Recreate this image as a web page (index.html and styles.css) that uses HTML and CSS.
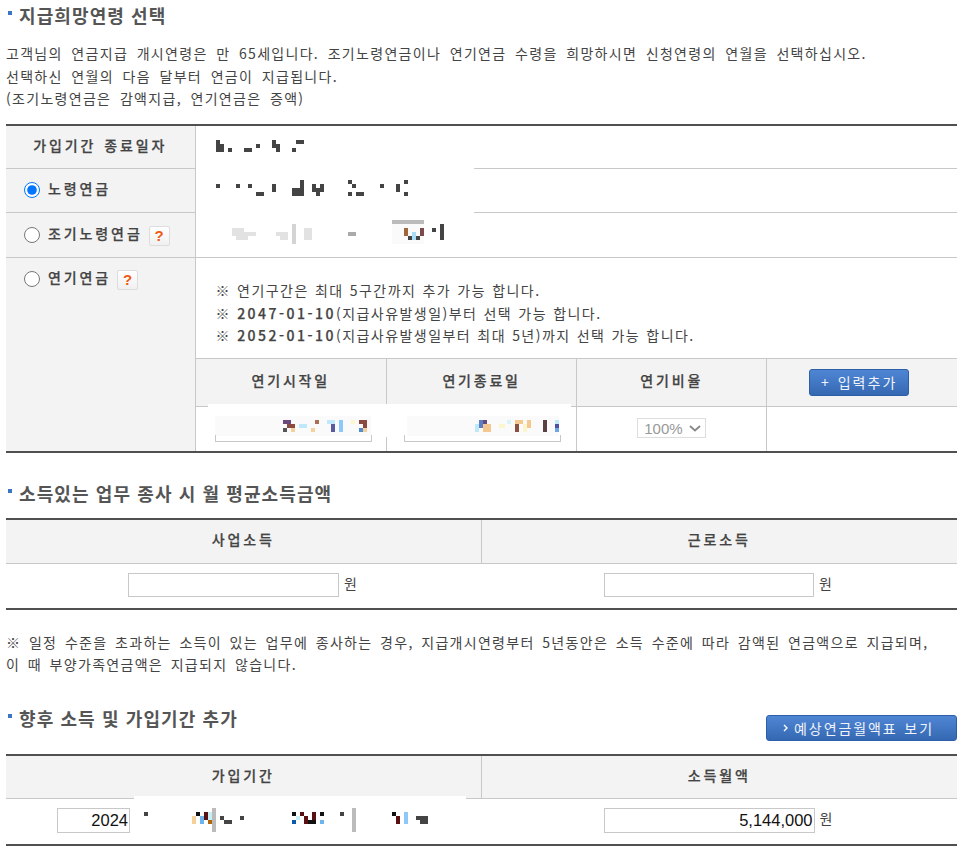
FILE: index.html
```html
<!DOCTYPE html>
<html lang="ko">
<head>
<meta charset="utf-8">
<title>지급희망연령 선택</title>
<link rel="stylesheet" href="styles.css">
</head>
<body>
<main class="page">
  <h2 class="title first">지급희망연령 선택</h2>
  <p class="desc">고객님의 연금지급 개시연령은 만 65세입니다. 조기노령연금이나 연기연금 수령을 희망하시면 신청연령의 연월을 선택하십시오.<br>선택하신 연월의 다음 달부터 연금이 지급됩니다.<br>(조기노령연금은 감액지급, 연기연금은 증액)</p>

  <table class="grid age">
    <colgroup><col class="c-left"><col></colgroup>
    <tr class="r1">
      <th class="center up">가입기간 종료일자</th>
      <td class="cell-mask">
        <svg class="px m1" width="92" height="12" viewBox="216 140 92 12"><path fill="#444" d="M216 140h4v4h4v4h-4v4h-4zM220 148h4v4h-4zM228 148h4v4h-4zM244 148h8v4h-8zM256 144h4v4h-4zM272 140h4v4h4v8h-4v-4h-4zM292 148h4v4h-4zM296 140h8v4h-8zM292 144h4v0h-4z"/></svg>
      </td>
    </tr>
    <tr class="r2">
      <th class="opt p10"><label class="radio"><input type="radio" name="p" checked>노령연금</label></th>
      <td class="cell-mask">
        <div class="wipe w2"></div>
        <svg class="px m2" width="192" height="16" viewBox="216 180 192 16"><path fill="#444" d="M216 184h4v4h-4zM236 184h4v4h-4zM248 184h4v4h-4zM256 192h8v4h-8zM272 184h4v8h-4zM292 188h4v-0h4v-8h4v16h-12zM312 184h4v4h4v-4h4v8h-4v4h-4v-4h-4zM348 180h4v4h4v4h-4v-4h-4zM348 192h4v4h-4zM356 192h8v4h-8zM380 184h4v4h-4zM396 184h4v8h-4zM404 180h4v4h-4zM404 192h4v4h-4z"/></svg>
      </td>
    </tr>
    <tr class="r3">
      <th class="opt p11"><label class="radio"><input type="radio" name="p">조기노령연금</label><span class="help">?</span></th>
      <td class="cell-mask">
        <div class="wipe w3"></div>
        <svg class="px m3" width="212" height="24" viewBox="232 220 212 24"><path fill="#e2e2e2" d="M232 228h12v4h12v4h-8v4h-12v-4h-4zM276 232h12v8h-8v-4h-4zM304 228h8v12h-8z"/><rect fill="#d4d4d4" x="292" y="224" width="4" height="20"/><rect fill="#aaa" x="348" y="232" width="8" height="4"/><rect fill="#bbb" x="392" y="220" width="32" height="4"/><rect fill="#fafafa" x="392" y="224" width="32" height="20"/><path fill="#a0663c" d="M404 228h4v8h-4z"/><path fill="#7c4a4a" d="M420 228h4v8h-4z"/><path fill="#444" d="M408 236h4v4h-4zM416 236h4v4h-4zM432 228h4v4h-4zM440 224h4v16h-4z"/><path fill="#a9dcf5" d="M412 232h4v8h-4z"/></svg>
      </td>
    </tr>
    <tr class="r4">
      <th class="opt p10"><label class="radio"><input type="radio" name="p">연기연금</label><span class="help">?</span></th>
      <td class="inner">
        <ul class="notes">
          <li>※ 연기구간은 최대 5구간까지 추가 가능 합니다.</li>
          <li>※ <b>2047-01-10</b>(지급사유발생일)부터 선택 가능 합니다.</li>
          <li>※ <b>2052-01-10</b>(지급사유발생일부터 최대 5년)까지 선택 가능 합니다.</li>
        </ul>
        <table class="defer">
          <colgroup><col class="dc1"><col><col><col></colgroup>
          <tr class="dh">
            <th class="lift">연기시작일</th>
            <th class="lift">연기종료일</th>
            <th class="lift">연기비율</th>
            <th><button class="btn add" type="button">+ 입력추가</button></th>
          </tr>
          <tr class="dr">
            <td colspan="2" class="date-cell">
              <div class="wipe w4"></div>
              <div class="date d1"><svg class="px" width="156" height="20" viewBox="216 416 156 20"><rect x="216" y="416" width="156" height="20" fill="#fafafa"/><path fill="#6a4a7a" d="M284 420h8v4h-8z"/><path fill="#8a4a40" d="M288 424h8v4h-8zM360 420h8v4h-8zM364 424h4v4h-4z"/><path fill="#555" d="M284 428h4v4h-4z"/><path fill="#f5d0a0" d="M292 428h4v4h-4zM312 428h4v4h-4zM364 428h4v4h-4z"/><path fill="#bfe8fa" d="M300 424h8v4h-8zM328 420h8v4h-8z"/><path fill="#a87050" d="M316 420h4v4h-4z"/><path fill="#5a5aa0" d="M332 424h4v8h-4z"/><path fill="#8cc8fa" d="M340 420h4v12h-4z"/><path fill="#fbf6cc" d="M352 420h4v4h-4z"/><path fill="#4f8fd0" d="M360 428h4v4h-4z"/></svg></div>
              <div class="date d2"><svg class="px" width="155" height="20" viewBox="405 416 155 20"><rect x="408" y="416" width="152" height="20" fill="#fafafa"/><path fill="#bfe8fa" d="M476 424h4v8h-4z"/><path fill="#5b80c8" d="M480 420h4v8h-4z"/><path fill="#6a4a7a" d="M484 420h4v4h-4z"/><path fill="#f5c890" d="M484 424h8v8h-8zM516 420h8v4h-8zM528 420h4v8h-4z"/><path fill="#fbf6cc" d="M500 424h6v4h-6zM524 424h4v8h-4z"/><path fill="#d8f4fa" d="M508 420h4v4h-4z"/><path fill="#8a5040" d="M516 424h4v8h-4z"/><path fill="#5a4040" d="M544 420h4v12h-4z"/><path fill="#bfe8fa" d="M556 420h4v4h-4z"/><path fill="#5050a0" d="M556 424h4v4h-4z"/><path fill="#6fa8e0" d="M556 428h4v4h-4z"/></svg></div>
              <i class="split"></i>
            </td>
            <td class="center-cell"><span class="select">100%<svg width="12" height="7" viewBox="0 0 12 7"><path d="M1 1l5 4.5L11 1" fill="none" stroke="#888" stroke-width="1.8"/></svg></span></td>
            <td></td>
          </tr>
        </table>
      </td>
    </tr>
  </table>

  <h2 class="title second">소득있는 업무 종사 시 월 평균소득금액</h2>
  <table class="grid two">
    <colgroup><col class="half"><col></colgroup>
    <tr class="h44"><th class="center up">사업소득</th><th class="center last up">근로소득</th></tr>
    <tr class="h45"><td class="center-cell fieldcell"><input class="field w211" type="text"><span class="unit">원</span></td><td class="center-cell last fieldcell"><input class="field w210" type="text"><span class="unit">원</span></td></tr>
  </table>

  <p class="desc foot">※ 일정 수준을 초과하는 소득이 있는 업무에 종사하는 경우, 지급개시연령부터 5년동안은 소득 수준에 따라 감액된 연금액으로 지급되며,<br>이 때 부양가족연금액은 지급되지 않습니다.</p>

  <div class="head-row">
    <h2 class="title third">향후 소득 및 가입기간 추가</h2>
    <button class="btn view" type="button"><svg width="5" height="8" viewBox="0 0 5 8"><path d="M1 1l3 3-3 3" fill="none" stroke="#fff" stroke-width="1.4"/></svg>예상연금월액표 보기</button>
  </div>
  <table class="grid two">
    <colgroup><col class="half"><col></colgroup>
    <tr class="h43"><th class="center up">가입기간</th><th class="center last up">소득월액</th></tr>
    <tr class="h45b"><td class="period">
      <input class="field num w73" type="text" value="2024">
      <div class="wipe w5"></div>
      <svg class="px m5" width="296" height="24" viewBox="134 808 296 24"><path fill="#444" d="M144 812h4v4h-4zM220 816h4v4h8v4h-8v-4h-4zM240 816h4v4h-4zM340 812h4v4h-4zM416 816h12v8h-8v-4h-4z"/><rect fill="#bbb" x="212" y="808" width="4" height="24"/><rect fill="#bbb" x="352" y="808" width="4" height="24"/><path fill="#f5d09a" d="M192 816h4v8h-4z"/><path fill="#6cb4ee" d="M200 816h4v8h-4zM320 820h4v4h-4z"/><path fill="#111" d="M196 812h4v4h-4zM292 812h4v4h-4zM320 812h4v4h-4zM392 812h4v4h-4zM308 820h8v4h-8z"/><path fill="#5a1010" d="M204 812h4v8h-4zM300 812h4v4h-4zM304 816h4v8h-4zM312 812h4v8h-4zM396 816h4v8h-4z"/><path fill="#c8f0f4" d="M208 812h4v8h-4zM296 816h4v4h-4z"/><path fill="#b0640c" d="M208 820h4v4h-4z"/><path fill="#0d5aa8" d="M292 820h4v4h-4z"/><path fill="#8cc8fa" d="M404 812h4v12h-4z"/></svg>
    </td><td class="center-cell last fieldcell"><input class="field num w211" type="text" value="5,144,000"><span class="unit">원</span></td></tr>
  </table>
</main>
</body>
</html>
```

FILE: styles.css
```css
* { box-sizing: border-box; }
html, body { margin: 0; padding: 0; background: #fff; }
body { font-family: "Noto Sans CJK KR", "Noto Sans", sans-serif; font-size: 14px; color: #444; }
.page { width: 951px; margin-left: 6px; }
.title { margin: 0; font-size: 18px; font-weight: 700; line-height: 24px; color: #555; padding-left: 13px; position: relative; letter-spacing: 1.1px; }
.title::before { content: ""; position: absolute; left: 2px; top: 8px; width: 4px; height: 4px; background: #3a76c4; }
.title.first { margin-top: 3px; }
.title.second { margin-top: 28px; }
.desc { margin: 15px 0 0; line-height: 22.5px; font-size: 14px; letter-spacing: 1.3px; word-spacing: 3.4px; color: #444; }
.desc.foot { margin-top: 21px; line-height: 22px; word-spacing: 2.4px; }
.grid { width: 951px; border-collapse: collapse; table-layout: fixed; border-top: 2px solid #505050; border-bottom: 2px solid #505050; }
.age { margin-top: 14px; }
.two { margin-top: 0; }
.second + .two { margin-top: 13px; }
.c-left { width: 189px; }
.half { width: 475px; }
.grid th, .grid td { padding: 0; border-top: 1px solid #c8c8c8; font-weight: 400; letter-spacing: 2.9px; word-spacing: 1px; }
.grid tr:first-child > th, .grid tr:first-child > td { border-top: 0; }
.grid > tbody > tr > th { background: #f3f3f3; border-right: 1px solid #c8c8c8; color: #444; font-weight: 500; -webkit-text-stroke: 0.25px #444; }
.grid > tbody > tr > th.last { border-right: 0; }
.grid > tbody > tr > td { border-right: 0; }
.grid th.up { padding-bottom: 4px; }
.r1 { height: 44px; }
.r2 { height: 44px; }
.r3 { height: 45px; }
.center { text-align: center; }
.opt { text-align: left; padding-left: 18px !important; vertical-align: top; white-space: nowrap; }
.p10 { padding-top: 10px !important; }
.p11 { padding-top: 11px !important; }
.radio { display: inline-flex; align-items: center; gap: 8px; vertical-align: top; line-height: 16px; height: 18px; }
.radio input { margin: 4px 0 0; width: 16px; height: 16px; accent-color: #0075ff; }
.help { display: inline-block; vertical-align: top; width: 21px; height: 20px; margin: 2px 0 0 6px; border: 1px solid #ddd; border-radius: 2px; background: linear-gradient(#fff, #f0f0f0); color: #f05a14; font: 700 15px/18px "Liberation Sans", sans-serif; letter-spacing: 0; text-align: center; -webkit-text-stroke: 0; }
.cell-mask { position: relative; }
.wipe { position: absolute; background: #fff; }
.w2 { left: 0; top: -1px; width: 278px; height: 45px; }
.w3 { left: 0; top: -1px; width: 278px; height: 44px; }
.px { display: block; }
.m1, .m2, .m3, .m5 { position: absolute; }
.m1 { left: 20px; top: 14px; }
.m2 { left: 20px; top: 11px; }
.m3 { left: 36px; top: 7px; }
.inner { padding: 0 !important; }
.notes { list-style: none; margin: 0; padding: 21px 0 11px 20px; line-height: 22.5px; color: #444; letter-spacing: 1.45px; word-spacing: 0.8px; }
.notes b { color: #444; font-weight: 500; letter-spacing: 2.5px; -webkit-text-stroke: 0.25px #444; }
.defer { width: 100%; border-collapse: collapse; table-layout: fixed; }
.dc1 { width: 191px; }
.defer th, .defer td { padding: 0; border-top: 1px solid #c8c8c8; border-left: 1px solid #c8c8c8; font-weight: 500; letter-spacing: 2.8px; text-align: center; }
.defer tr > :first-child { border-left: 0; }
.defer th { background: #f3f3f3; -webkit-text-stroke: 0.25px #444; }
.grid .defer .dh th { border-top: 1px solid #c8c8c8; }
.defer th.lift { padding-bottom: 5px; }
.dh { height: 48px; }
.dr { height: 45px; }
.date-cell { position: relative; }
.w4 { left: 12px; top: -3px; width: 363px; height: 32px; }
.date { position: absolute; top: 9px; height: 26px; }
.date::after { content: ""; position: absolute; left: 0; bottom: 0; height: 6px; border: 1px solid #c8c8c8; border-top: 0; }
.d1 { left: 19px; width: 156px; }
.d1::after { width: 155px; }
.d2 { left: 208px; width: 155px; }
.d2::after { width: 155px; }
.split { position: absolute; left: 190px; top: 30px; bottom: 0; width: 1px; background: #c8c8c8; }
.center-cell { text-align: center; }
.select { display: inline-flex; align-items: center; gap: 6px; height: 20px; width: 69px; padding-left: 6px; margin-bottom: 2px; border: 1px solid #ddd; color: #999; font: 400 15px "Liberation Sans", sans-serif; letter-spacing: 0; vertical-align: middle; }
.btn { border: 1px solid #2c5fa8; border-radius: 3px; background: linear-gradient(#4f86d4, #3568b2); color: #f0f4fa; font: 400 14px "Noto Sans CJK KR", sans-serif; letter-spacing: 2px; word-spacing: 1px; padding: 0; -webkit-text-stroke: 0; }
.add { width: 100px; height: 27px; margin-right: 6px; }
.view { width: 191px; height: 26px; display: flex; align-items: center; justify-content: center; gap: 6px; padding-right: 6px; margin-top: 9px; letter-spacing: 1.9px; }
.h44 { height: 44px; }
.h43 { height: 43px; }
.h45 { height: 46px; }
.h45b { height: 47px; }
.fieldcell { padding: 0 2px 2px 0 !important; }
.field { height: 24px; border: 1px solid #c8c8c8; background: #fff; padding: 0 1px; margin: 0; font: 400 16.5px "Liberation Sans", sans-serif; color: #111; vertical-align: middle; }
.num { text-align: right; height: 25px; }
.w210 { width: 210px; }
.w211 { width: 211px; }
.w73 { width: 73px; }
.unit { margin-left: 5px; color: #444; vertical-align: 0; font-weight: 400; letter-spacing: 0; }
.head-row { display: flex; justify-content: space-between; align-items: flex-start; margin-top: 31px; height: 48px; }
.period { position: relative; padding: 0 0 2px 51px !important; }
.w5 { left: 128px; top: -3px; width: 332px; height: 40px; }
.m5 { left: 128px; top: 9px; }
```
